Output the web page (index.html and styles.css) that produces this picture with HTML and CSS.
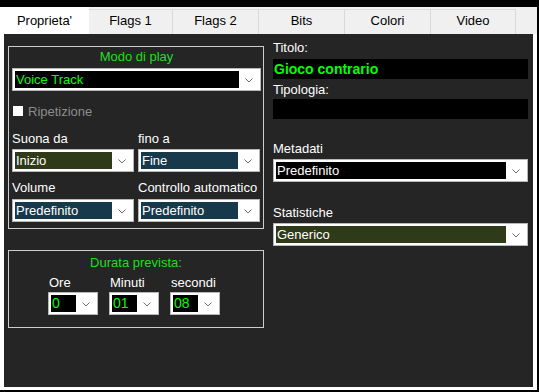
FILE: index.html
```html
<!DOCTYPE html>
<html lang="it">
<head>
    <meta charset="UTF-8">
    <title>Proprieta'</title>
    <link rel="stylesheet" href="styles.css">
</head>
<body>

    <div class="window">
        <ul class="tabs">
            <li class="tab active">Proprieta'</li>
            <li class="tab w84">Flags 1</li>
            <li class="tab">Flags 2</li>
            <li class="tab">Bits</li>
            <li class="tab">Colori</li>
            <li class="tab w85">Video</li>
        </ul>

        <div class="panel">
            <div class="panel-inner">

                <div class="left">
                    <fieldset class="group play">
                        <div class="group-title">Modo di play</div>
                        <div class="select">
                            <span class="val black green">Voice Track</span>
                            <span class="arrow"><svg width="8" height="5" viewBox="0 0 8 5"><polyline points="0.5,0.5 4,4 7.5,0.5" /></svg></span>
                        </div>
                        <label class="check"><span class="box"></span>Ripetizione</label>

                        <div class="pair">
                            <div class="field">
                                <div class="label">Suona da</div>
                                <div class="select">
                                    <span class="val olive">Inizio</span>
                                    <span class="arrow"><svg width="8" height="5" viewBox="0 0 8 5"><polyline points="0.5,0.5 4,4 7.5,0.5" /></svg></span>
                                </div>
                            </div>
                            <div class="field">
                                <div class="label">fino a</div>
                                <div class="select">
                                    <span class="val teal">Fine</span>
                                    <span class="arrow"><svg width="8" height="5" viewBox="0 0 8 5"><polyline points="0.5,0.5 4,4 7.5,0.5" /></svg></span>
                                </div>
                            </div>
                        </div>

                        <div class="pair second">
                            <div class="field">
                                <div class="label">Volume</div>
                                <div class="select">
                                    <span class="val teal">Predefinito</span>
                                    <span class="arrow"><svg width="8" height="5" viewBox="0 0 8 5"><polyline points="0.5,0.5 4,4 7.5,0.5" /></svg></span>
                                </div>
                            </div>
                            <div class="field">
                                <div class="label">Controllo automatico</div>
                                <div class="select">
                                    <span class="val teal">Predefinito</span>
                                    <span class="arrow"><svg width="8" height="5" viewBox="0 0 8 5"><polyline points="0.5,0.5 4,4 7.5,0.5" /></svg></span>
                                </div>
                            </div>
                        </div>
                    </fieldset>

                    <fieldset class="group duration">
                        <div class="group-title">Durata prevista:</div>
                        <div class="times">
                            <div class="time">
                                <div class="label">Ore</div>
                                <div class="select small">
                                    <span class="val black green">0</span>
                                    <span class="arrow"><svg width="8" height="5" viewBox="0 0 8 5"><polyline points="0.5,0.5 4,4 7.5,0.5" /></svg></span>
                                </div>
                            </div>
                            <div class="time">
                                <div class="label">Minuti</div>
                                <div class="select small">
                                    <span class="val black green">01</span>
                                    <span class="arrow"><svg width="8" height="5" viewBox="0 0 8 5"><polyline points="0.5,0.5 4,4 7.5,0.5" /></svg></span>
                                </div>
                            </div>
                            <div class="time">
                                <div class="label">secondi</div>
                                <div class="select small">
                                    <span class="val black green">08</span>
                                    <span class="arrow"><svg width="8" height="5" viewBox="0 0 8 5"><polyline points="0.5,0.5 4,4 7.5,0.5" /></svg></span>
                                </div>
                            </div>
                        </div>
                    </fieldset>
                </div>

                <div class="right">
                    <div class="label">Titolo:</div>
                    <div class="text-box title">Gioco contrario</div>
                    <div class="label tipo">Tipologia:</div>
                    <div class="text-box"></div>

                    <div class="label meta">Metadati</div>
                    <div class="select">
                        <span class="val black">Predefinito</span>
                        <span class="arrow"><svg width="8" height="5" viewBox="0 0 8 5"><polyline points="0.5,0.5 4,4 7.5,0.5" /></svg></span>
                    </div>

                    <div class="label stats">Statistiche</div>
                    <div class="select">
                        <span class="val olive">Generico</span>
                        <span class="arrow"><svg width="8" height="5" viewBox="0 0 8 5"><polyline points="0.5,0.5 4,4 7.5,0.5" /></svg></span>
                    </div>
                </div>

            </div>
        </div>
    </div>

</body>
</html>
```

FILE: styles.css
```css
* { margin: 0; padding: 0; box-sizing: border-box; }
body { background: #000; font-family: 'Liberation Sans', Arial, sans-serif; font-size: 13px; color: #fff; }

.window { margin-top: 7px; width: 537px; height: 383px; background: #f0f0f0; }

/* tab strip */
.tabs { list-style: none; display: flex; height: 27px; align-items: flex-start; }
.tab {
    width: 86px; height: 25px; margin-top: 2px; line-height: 22px; text-align: center;
    background: #f0f0f0; color: #000; border: 1px solid #d9d9d9; border-left: none; border-bottom: none;
}
.tab.w84 { width: 84px; }
.tab.w85 { width: 85px; }
.tab.active { width: 89px; height: 27px; margin-top: 0; line-height: 28px; background: #fff; border: none; }

.panel { height: 356px; background: #fff; padding: 0 4px 3px 4px; }
.panel-inner { height: 100%; background: #252525; display: flex; padding: 6px 0 0 4px; gap: 9px; }

.label { line-height: 16px; white-space: nowrap; }

/* left column */
.left { width: 256px; padding-top: 6px; display: flex; flex-direction: column; gap: 21px; }
.group { border: 1px solid #cdcdcd; }
.group-title { color: #1fdf1f; text-align: center; line-height: 16px; }

.play { height: 183px; padding: 2px 2px 0 3px; }
.play .group-title { margin-bottom: 3px; }
.check { display: flex; align-items: center; gap: 5px; margin-top: 12px; height: 16px; color: #8c8c8c; padding-left: 1px; }
.check .box { width: 10px; height: 10px; background: #fff; }

.pair { display: flex; gap: 4px; margin-top: 12px; }
.pair.second { margin-top: 8px; }
.pair .field { width: 122px; }
.pair .label { margin-bottom: 2px; }
.pair.second .label { margin-bottom: 3px; }

.duration { height: 78px; padding: 4px 0 0 39px; }
.duration .group-title { margin-left: -39px; }
.times { display: flex; gap: 11px; margin-top: 4px; }
.time { width: 50px; }
.time .label { padding-left: 1px; margin-bottom: 1px; }

/* combo boxes */
.select { display: flex; height: 23px; border: 1px solid #b8b8b8; background: #fff; padding: 2px; }
.select .val { flex: 1; line-height: 17px; padding-left: 1px; white-space: nowrap; overflow: hidden; }
.select .arrow { width: 19px; display: flex; align-items: center; justify-content: center; padding-top: 1px; }
.select .arrow polyline { fill: none; stroke: #6d6d6d; stroke-width: 1; }
.select.small .val { font-size: 14px; }

.black { background: #000; }
.olive { background: #2f3a18; }
.teal { background: #163a4b; }
.green { color: #00ff00; }

/* right column */
.right { width: 255px; display: flex; flex-direction: column; }
.text-box { height: 20px; background: #000; margin-top: 3px; }
.text-box.title { color: #00ff00; font-weight: bold; font-size: 14px; line-height: 20px; padding-left: 1px; }
.right .tipo { margin-top: 3px; }
.right .tipo + .text-box { margin-top: 1px; }
.right .meta { margin-top: 22px; margin-bottom: 2px; }
.right .stats { margin-top: 23px; margin-bottom: 2px; }
```
